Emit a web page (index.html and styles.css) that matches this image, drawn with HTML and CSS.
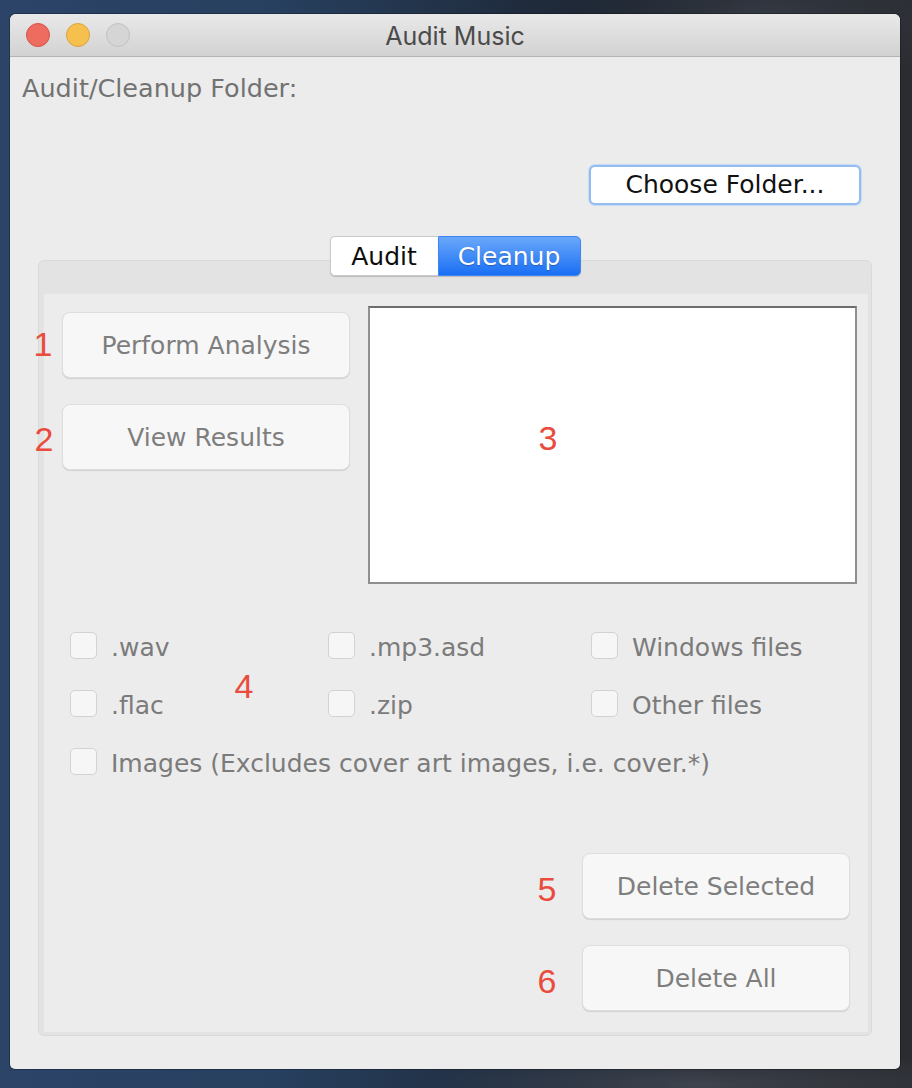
FILE: index.html
```html
<!DOCTYPE html>
<html lang="en">
<head>
<meta charset="utf-8">
<title>Audit Music</title>
<link rel="stylesheet" href="styles.css">
</head>
<body>
<div class="desktop">
  <div class="window">
    <div class="titlebar">
      <div class="lights">
        <span class="light red"></span>
        <span class="light yellow"></span>
        <span class="light gray"></span>
      </div>
      <div class="title">Audit Music</div>
      <div class="spacer"></div>
    </div>
    <div class="content">
      <div class="folder-label">Audit/Cleanup Folder:</div>
      <div class="choose-row">
        <button class="choose-btn">Choose Folder...</button>
      </div>
      <div class="tabs-wrap">
        <div class="tabs">
          <div class="tab">Audit</div>
          <div class="tab active">Cleanup</div>
        </div>
        <div class="panel">
          <div class="panel-inner">
            <div class="top-row">
              <div class="action-col">
                <button class="btn">Perform Analysis</button>
                <button class="btn">View Results</button>
              </div>
              <div class="results-box"></div>
            </div>
            <div class="checks">
              <label class="check"><span class="box"></span><span class="check-label">.wav</span></label>
              <label class="check"><span class="box"></span><span class="check-label">.mp3.asd</span></label>
              <label class="check"><span class="box"></span><span class="check-label">Windows files</span></label>
              <label class="check"><span class="box"></span><span class="check-label">.flac</span></label>
              <label class="check"><span class="box"></span><span class="check-label">.zip</span></label>
              <label class="check"><span class="box"></span><span class="check-label">Other files</span></label>
              <label class="check wide"><span class="box"></span><span class="check-label">Images (Excludes cover art images, i.e. cover.*)</span></label>
            </div>
            <div class="delete-col">
              <button class="btn btn-del">Delete Selected</button>
              <button class="btn btn-del">Delete All</button>
            </div>
          </div>
        </div>
      </div>
    </div>
    <span class="note n1">1</span>
    <span class="note n2">2</span>
    <span class="note n3">3</span>
    <span class="note n4">4</span>
    <span class="note n5">5</span>
    <span class="note n6">6</span>
  </div>
</div>
</body>
</html>
```

FILE: styles.css
```css
html, body {
  margin: 0;
  padding: 0;
}

body {
  width: 912px;
  height: 1088px;
  overflow: hidden;
  background:
    radial-gradient(ellipse 260px 120px at 760px 20px, rgba(70,78,92,0.55), rgba(0,0,0,0) 70%),
    radial-gradient(ellipse 400px 60px at 700px 1085px, rgba(90,96,108,0.55), rgba(0,0,0,0) 70%),
    linear-gradient(180deg, rgba(0,0,0,0) 1066px, rgba(20,22,26,0.0) 1066px),
    linear-gradient(90deg, #2b4468 0%, #27405f 30%, #1f2a3a 60%, #1d2026 80%, #2a2c31 100%);
  font-family: "DejaVu Sans", "Open Sans", sans-serif;
}

.desktop {
  padding: 14px 12px 0 10px;
}

.window {
  position: relative;
  width: 890px;
  height: 1055px;
  background: #ececec;
  border-radius: 6px 6px 5px 5px;
  overflow: hidden;
  box-shadow: 0 0 0 1px rgba(0, 0, 0, 0.25);
}

/* Title bar */
.titlebar {
  height: 42px;
  display: grid;
  grid-template-columns: 1fr auto 1fr;
  align-items: center;
  background: linear-gradient(#e9e9e9, #d2d2d2);
  border-bottom: 1px solid #b3b3b3;
}

.lights {
  display: flex;
  gap: 16px;
  padding-left: 16px;
}

.light {
  width: 22px;
  height: 22px;
  border-radius: 50%;
  border: 1px solid;
}

.light.red { background: #ee6b60; border-color: #d4544a; }
.light.yellow { background: #f6c04f; border-color: #d9a23f; }
.light.gray { background: #d5d5d5; border-color: #c1c1c1; }

.title {
  font-family: "Inter", "DejaVu Sans", sans-serif;
  font-size: 25px;
  color: #4b4b4b;
  line-height: 30px;
  padding-top: 2px;
}

/* Content */
.content {
  padding-top: 16px;
}

.folder-label {
  padding-left: 12px;
  font-size: 25.5px;
  line-height: 30px;
  color: #727272;
}

.choose-row {
  display: flex;
  justify-content: flex-end;
  padding-right: 39px;
  margin-top: 62px;
}

.choose-btn {
  width: 272px;
  height: 40px;
  box-sizing: border-box;
  background: #ffffff;
  border: 2px solid #94bcf1;
  border-radius: 6px;
  box-shadow: 0 0 0 1px #c7dbf6;
  font-family: "DejaVu Sans", sans-serif;
  font-size: 25px;
  color: #111111;
  padding: 0;
  line-height: 36px;
}

.tabs-wrap {
  margin: 31px 28px 0 28px;
}

.tabs {
  position: relative;
  z-index: 1;
  display: flex;
  justify-content: center;
  height: 40px;
}

.tab {
  box-sizing: border-box;
  height: 40px;
  font-size: 25px;
  line-height: 40px;
  text-align: center;
  width: 108px;
  background: #ffffff;
  color: #0d0d0d;
  border: 1px solid #c9c9c9;
  border-right: none;
  border-radius: 5px 0 0 5px;
  box-shadow: 0 1px 1px rgba(0, 0, 0, 0.18);
}

.tab.active {
  width: 143px;
  color: #ffffff;
  background: linear-gradient(#6aa8fb, #1a6ff4);
  border: 1px solid #3c85f2;
  border-radius: 0 5px 5px 0;
  text-shadow: 0 1px 1px rgba(0, 0, 0, 0.25);
}

.panel {
  margin-top: -16px;
  background: #e3e3e3;
  border: 1px solid #dadada;
  border-radius: 6px;
  padding: 33px 3px 3px 5px;
}

.panel-inner {
  height: 738px;
  background: #ececec;
  display: flex;
  flex-direction: column;
}

.top-row {
  display: flex;
}

.action-col {
  display: flex;
  flex-direction: column;
  gap: 26px;
  padding-left: 18px;
  padding-top: 18px;
}

.btn {
  width: 288px;
  height: 66px;
  box-sizing: border-box;
  background: #f7f7f7;
  border: 1px solid #dedede;
  border-radius: 8px;
  box-shadow: 0 1px 1px rgba(0, 0, 0, 0.12);
  font-family: "DejaVu Sans", sans-serif;
  font-size: 25px;
  color: #7e7e7e;
  padding: 0;
}

.results-box {
  box-sizing: border-box;
  width: 489px;
  height: 278px;
  margin-left: 18px;
  margin-top: 12px;
  background: #ffffff;
  border: 2px solid #8f8f8f;
  border-top-color: #6d6d6d;
}

.checks {
  display: grid;
  grid-template-columns: 258px 263px auto;
  row-gap: 31px;
  padding-left: 26px;
  margin-top: 48px;
}

.check {
  display: flex;
  align-items: center;
  gap: 14px;
  height: 27px;
}

.check.wide {
  grid-column: 1 / -1;
}

.box {
  width: 27px;
  height: 27px;
  box-sizing: border-box;
  border: 1px solid #d2d2d2;
  border-radius: 5px;
  background: #f6f6f6;
  flex: none;
}

.check-label {
  font-size: 25px;
  line-height: 27px;
  margin-top: 4px;
  color: #7b7b7b;
  white-space: nowrap;
}

.delete-col {
  align-self: flex-end;
  display: flex;
  flex-direction: column;
  gap: 26px;
  padding-right: 18px;
  margin-top: 78px;
}

.btn-del {
  width: 268px;
}

/* Red annotation numbers (overlay) */
.note {
  position: absolute;
  width: 40px;
  text-align: center;
  font-family: "Liberation Sans", Arial, sans-serif;
  font-size: 34px;
  line-height: 34px;
  color: #e94b3c;
}

.n1 { left: 13px; top: 313px; }
.n2 { left: 14px; top: 408px; }
.n3 { left: 518px; top: 407px; }
.n4 { left: 214px; top: 655px; }
.n5 { left: 517px; top: 858px; }
.n6 { left: 517px; top: 950px; }
```
